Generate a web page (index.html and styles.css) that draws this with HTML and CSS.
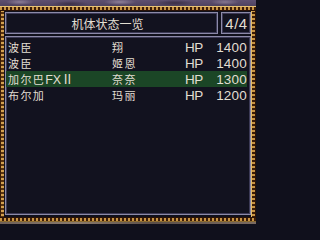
FILE: index.html
```html
<!DOCTYPE html>
<html lang="zh">
<head>
<meta charset="utf-8">
<title>机体状态一览</title>
<link rel="stylesheet" href="styles.css">
</head>
<body>
<div class="screen">
  <div class="marble marble-top"></div>
  <div class="frame">
    <div class="header">
      <div class="box title">机体状态一览</div>
      <div class="box page">4/4</div>
    </div>
    <div class="box list">
      <div class="row"><span class="name">波臣</span><span class="pilot">翔</span><span class="hp">HP</span><span class="num">1400</span></div>
      <div class="row"><span class="name">波臣</span><span class="pilot">姬恩</span><span class="hp">HP</span><span class="num">1400</span></div>
      <div class="row sel"><span class="name">加尔巴<span class="latin">FXⅡ</span></span><span class="pilot">奈奈</span><span class="hp">HP</span><span class="num">1300</span></div>
      <div class="row"><span class="name">布尔加</span><span class="pilot">玛丽</span><span class="hp">HP</span><span class="num">1200</span></div>
    </div>
  </div>
  <div class="marble marble-bottom"></div>
</div>
</body>
</html>
```
FILE: styles.css
```css
html, body {
  margin: 0;
  padding: 0;
}
body {
  width: 256px;
  height: 224px;
  overflow: hidden;
  background: #10101c;
  color: #e2ded2;
  font-family: "Noto Sans CJK SC", "Liberation Sans", sans-serif;
  font-size: 12px;
}
.screen {
  width: 256px;
  height: 224px;
  display: flex;
  flex-direction: column;
}
.marble-top {
  height: 6px;
  background:
    radial-gradient(ellipse 14px 3px at 20px 2px, #8a7c96 0, transparent 100%),
    radial-gradient(ellipse 18px 3px at 70px 4px, #3c3048 0, transparent 100%),
    radial-gradient(ellipse 16px 3px at 120px 2px, #8e8098 0, transparent 100%),
    radial-gradient(ellipse 20px 3px at 175px 3px, #3a2e46 0, transparent 100%),
    radial-gradient(ellipse 14px 3px at 225px 2px, #847690 0, transparent 100%),
    linear-gradient(#5e5070, #4e4260);
}
.marble-bottom {
  height: 2px;
  background: linear-gradient(90deg, #6e6058, #8a7a6c 30%, #5a4e48 60%, #7a6a60);
}
.frame {
  flex: 1;
  box-sizing: border-box;
  padding: 6px 5px 7px 5px;
  display: flex;
  flex-direction: column;
  gap: 2px;
  background:
    /* top */
    linear-gradient(#e6c274, #e6c274) 0 0 / 100% 1px no-repeat,
    repeating-linear-gradient(90deg, #c99444 0 2px, #3a1c08 2px 4px) 0 1px / 100% 3px no-repeat,
    linear-gradient(#2a1206, #2a1206) 0 4px / 100% 1px no-repeat,
    /* bottom */
    linear-gradient(#2a1206, #2a1206) 0 calc(100% - 4px) / 100% 1px no-repeat,
    repeating-linear-gradient(90deg, #c99444 0 2px, #3a1c08 2px 4px) 0 calc(100% - 1px) / 100% 3px no-repeat,
    linear-gradient(#8a6a30, #8a6a30) 0 100% / 100% 1px no-repeat,
    /* left */
    linear-gradient(#3a1c08, #3a1c08) 0 0 / 1px 100% no-repeat,
    repeating-linear-gradient(180deg, #d2a050 0 2px, #5a3410 2px 4px) 1px 0 / 3px 100% no-repeat,
    /* right */
    linear-gradient(#e0bc6c, #e0bc6c) calc(100% - 4px) 0 / 1px 100% no-repeat,
    repeating-linear-gradient(180deg, #c99444 0 2px, #3a1c08 2px 4px) calc(100% - 1px) 0 / 3px 100% no-repeat,
    linear-gradient(#2a1206, #2a1206) 100% 0 / 1px 100% no-repeat,
    #10101c;
}
.header {
  display: flex;
  gap: 3px;
  height: 22px;
}
.box {
  box-sizing: border-box;
  border: 1px solid #8c8aa8;
  box-shadow: inset 0 0 0 1px #3c3a56;
  background: #12121f;
}
.title {
  flex: 1;
  display: flex;
  align-items: center;
  justify-content: center;
  padding-right: 8px;
  font-size: 12px;
}
.page {
  width: 30px;
  display: flex;
  align-items: center;
  justify-content: center;
  font-family: "Liberation Sans", sans-serif;
  font-size: 15px;
  letter-spacing: 0.5px;
  padding-left: 1px;
}
.list {
  flex: 1;
  padding: 2px 3px 0 0;
}
.row {
  display: grid;
  grid-template-columns: 104px 73px auto 1fr;
  align-items: center;
  height: 16px;
  padding-left: 2px;
  font-size: 11px;
  letter-spacing: 1.4px;
}
.row.sel {
  background: #1b4626;
}
.latin {
  font-family: "Liberation Sans", "Noto Sans CJK SC", sans-serif;
  font-size: 12.5px;
  line-height: 12px;
  letter-spacing: 0;
}
.hp, .num {
  font-family: "Liberation Sans", sans-serif;
  font-size: 13.5px;
}
.hp {
  letter-spacing: -0.6px;
}
.num {
  text-align: right;
  letter-spacing: 0.2px;
}
```
